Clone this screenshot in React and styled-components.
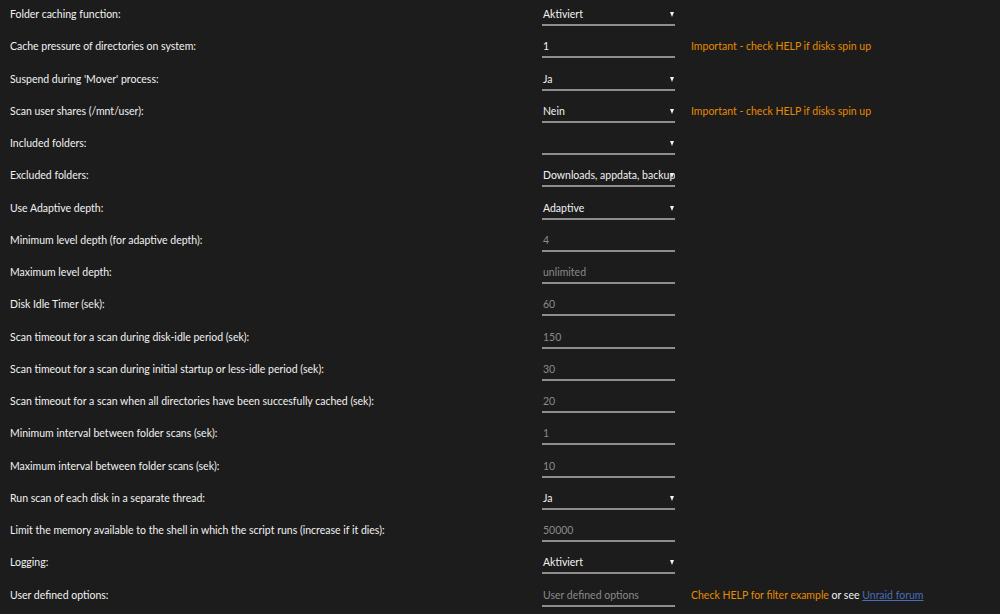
import React from "react";
import styled, { createGlobalStyle } from "styled-components";

const Global = createGlobalStyle`
  html, body { margin: 0; padding: 0; background: #1c1c1c; }
  body { font-family: Lato, "Open Sans", sans-serif; font-size: 10.5px; color: #f2f2f2; }
`;

const Page = styled.div`
  width: 1000px;
  height: 614px;
  overflow: hidden;
  background: #1c1c1c;
  padding: 4px 0 0 10px;
  box-sizing: border-box;
`;

const Row = styled.div`
  display: grid;
  grid-template-columns: 516px 133px auto;
  column-gap: 16px;
  height: 32.25px;
  align-items: start;
`;

const Label = styled.div`
  line-height: 20px;
  color: #f2f2f2;
  white-space: nowrap;
`;

const Control = styled.div`
  position: relative;
  height: 20px;
  line-height: 20px;
  border-bottom: 2px solid #8e8e8e;
  padding-left: 1px;
  color: ${(p) => (p.$muted ? "#8a8a8a" : "#f2f2f2")};
  white-space: nowrap;
  overflow: hidden;
`;

const Arrow = styled.span`
  position: absolute;
  right: 1px;
  top: 8px;
  width: 0;
  height: 0;
  border-left: 2.5px solid transparent;
  border-right: 2.5px solid transparent;
  border-top: 5px solid #f2f2f2;
`;

const Help = styled.div`
  line-height: 20px;
  color: #e68a00;
  white-space: nowrap;
`;

const Plain = styled.span`
  color: #f2f2f2;
`;

const Link = styled.a`
  color: #486dba;
  text-decoration: underline;
`;

const important = "Important - check HELP if disks spin up";

const rows = [
  { label: "Folder caching function:", value: "Aktiviert", select: true },
  { label: "Cache pressure of directories on system:", value: "1", help: important },
  { label: "Suspend during 'Mover' process:", value: "Ja", select: true },
  { label: "Scan user shares (/mnt/user):", value: "Nein", select: true, help: important },
  { label: "Included folders:", value: "", select: true },
  { label: "Excluded folders:", value: "Downloads, appdata, backup", select: true },
  { label: "Use Adaptive depth:", value: "Adaptive", select: true },
  { label: "Minimum level depth (for adaptive depth):", value: "4", muted: true },
  { label: "Maximum level depth:", value: "unlimited", muted: true },
  { label: "Disk Idle Timer (sek):", value: "60", muted: true },
  { label: "Scan timeout for a scan during disk-idle period (sek):", value: "150", muted: true },
  { label: "Scan timeout for a scan during initial startup or less-idle period (sek):", value: "30", muted: true },
  { label: "Scan timeout for a scan when all directories have been succesfully cached (sek):", value: "20", muted: true },
  { label: "Minimum interval between folder scans (sek):", value: "1", muted: true },
  { label: "Maximum interval between folder scans (sek):", value: "10", muted: true },
  { label: "Run scan of each disk in a separate thread:", value: "Ja", select: true },
  { label: "Limit the memory available to the shell in which the script runs (increase if it dies):", value: "50000", muted: true },
  { label: "Logging:", value: "Aktiviert", select: true },
  { label: "User defined options:", value: "User defined options", muted: true, last: true },
];

export default function App() {
  return (
    <>
      <Global />
      <Page>
        {rows.map((r, i) => (
          <Row key={i}>
            <Label>{r.label}</Label>
            <Control $muted={r.muted}>
              {r.value}
              {r.select && <Arrow />}
            </Control>
            {r.help && <Help>{r.help}</Help>}
            {r.last && (
              <Help>
                Check HELP for filter example <Plain>or see</Plain>{" "}
                <Link href="#">Unraid forum</Link>
              </Help>
            )}
          </Row>
        ))}
      </Page>
    </>
  );
}
